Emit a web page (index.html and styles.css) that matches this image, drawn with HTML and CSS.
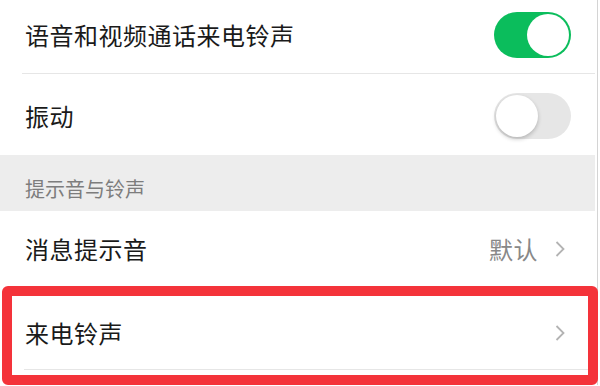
FILE: index.html
```html
<!DOCTYPE html>
<html lang="zh-CN">
<head>
    <meta charset="UTF-8">
    <meta name="viewport" content="width=device-width, initial-scale=1.0">
    <title>新消息通知</title>
    <link rel="stylesheet" href="styles.css">
</head>
<body>
    <div class="page">
        <!-- Call ringtone switch -->
        <div class="row row-first">
            <span class="label">语音和视频通话来电铃声</span>
            <span class="switch on"><span class="knob"></span></span>
        </div>

        <div class="row row-vibrate">
            <span class="label">振动</span>
            <span class="switch"><span class="knob"></span></span>
        </div>

        <div class="section-title">提示音与铃声</div>

        <div class="row row-link">
            <span class="label">消息提示音</span>
            <span class="value">默认</span>
            <svg class="arrow" viewBox="0 0 10 16" width="10" height="16">
                <polyline points="1.5,1 8.5,8 1.5,15" />
            </svg>
        </div>

        <!-- Highlighted row -->
        <div class="highlight">
            <div class="row row-link row-boxed">
                <span class="label">来电铃声</span>
                <svg class="arrow" viewBox="0 0 10 16" width="10" height="16">
                    <polyline points="1.5,1 8.5,8 1.5,15" />
                </svg>
            </div>
        </div>
    </div>
</body>
</html>
```

FILE: styles.css
```css
/* Reset */
* {
    margin: 0;
    padding: 0;
    box-sizing: border-box;
}

body {
    font-family: "Noto Sans CJK SC", "Noto Sans", sans-serif;
    background-color: #fff;
    color: #1a1a1a;
    width: 600px;
    height: 386px;
    overflow: hidden;
}

.page {
    width: 598px;
    border-right: 1px solid #d4d4d4;
    background-color: #fff;
}

/* Rows */
.row {
    display: flex;
    align-items: center;
    padding: 0 26px 0 25px;
    font-size: 24px;
    letter-spacing: 0.5px;
    position: relative;
}

.label {
    flex: 1;
    line-height: 1;
}

.row-first {
    height: 74px;
    padding-bottom: 4px;
}

/* Divider, inset from the left */
.row-first::after,
.row-boxed::after {
    content: "";
    position: absolute;
    left: 22px;
    right: 2px;
    bottom: 0;
    height: 1px;
    background-color: #e6e6e6;
}

.row-vibrate {
    height: 81px;
    padding-top: 2px;
    padding-bottom: 0;
}

/* Switch */
.switch {
    width: 77px;
    height: 46px;
    border-radius: 23px;
    background-color: #e6e6e6;
    position: relative;
    flex-shrink: 0;
}

.switch .knob {
    position: absolute;
    top: 2px;
    left: 2px;
    width: 42px;
    height: 42px;
    border-radius: 50%;
    background-color: #fff;
    box-shadow: 0 2px 4px rgba(0, 0, 0, 0.22);
}

.switch.on {
    background-color: #0bbd5c;
}

.switch.on .knob {
    left: 33px;
    box-shadow: none;
}

/* Section header */
.section-title {
    width: 595px;
    height: 56px;
    background-color: #ededed;
    color: #7d7d7d;
    font-size: 20px;
    padding: 24px 0 0 25px;
    line-height: 1;
}

/* Link rows */
.row-link {
    height: 75px;
    padding-right: 32px;
}

.value {
    color: #888;
    margin-right: 17px;
    line-height: 1;
}

.arrow {
    flex-shrink: 0;
}

.arrow polyline {
    fill: none;
    stroke: #b3b3b3;
    stroke-width: 1.8;
}

/* Red annotation box */
.highlight {
    border: 10px solid #f4333a;
    border-radius: 6px;
    margin: 0 -1px 0 2px;
    height: 99px;
}

.row-boxed {
    height: 74px;
    padding-left: 13px;
    padding-right: 23px;
}

.row-boxed::after {
    left: 12px;
    right: 0;
}
```
